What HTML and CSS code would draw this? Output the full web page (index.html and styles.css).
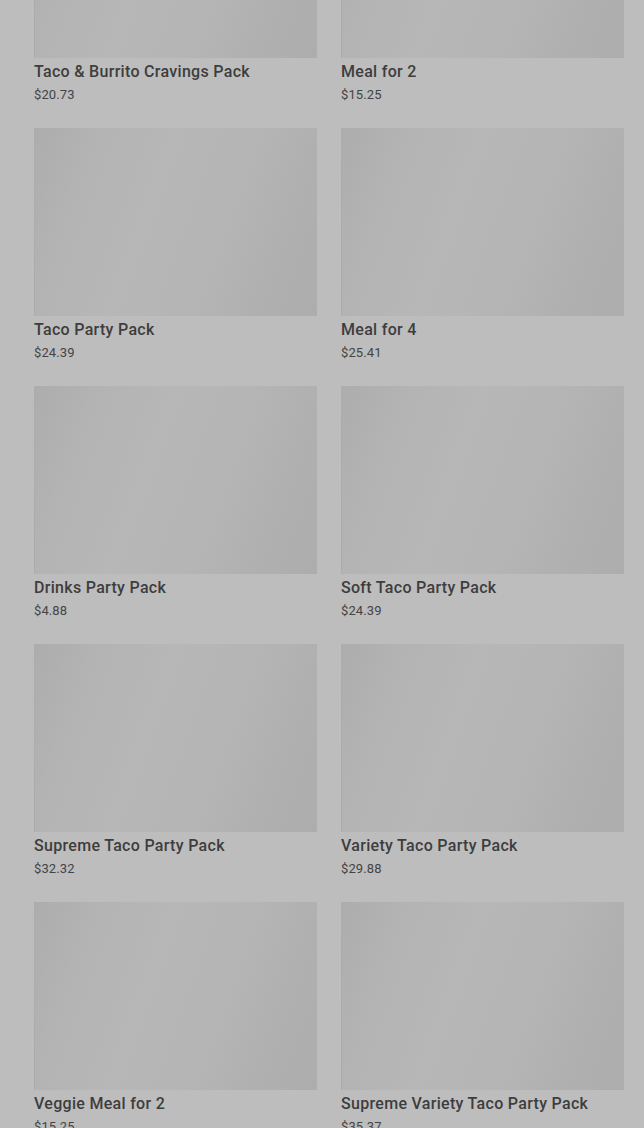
FILE: index.html
```html
<!doctype html>
<html lang="en">
<head>
    <meta charset="utf-8">
    <meta name="viewport" content="width=device-width, initial-scale=1">
    <title>Party Packs</title>
    <link rel="stylesheet" href="styles.css">
</head>
<body>
    <div class="menu">
        <div class="grid">
            <div class="item">
                <div class="thumb"></div>
                <div class="name">Taco &amp; Burrito Cravings Pack</div>
                <div class="price">$20.73</div>
            </div>
            <div class="item">
                <div class="thumb"></div>
                <div class="name">Meal for 2</div>
                <div class="price">$15.25</div>
            </div>
            <div class="item">
                <div class="thumb"></div>
                <div class="name">Taco Party Pack</div>
                <div class="price">$24.39</div>
            </div>
            <div class="item">
                <div class="thumb"></div>
                <div class="name">Meal for 4</div>
                <div class="price">$25.41</div>
            </div>
            <div class="item">
                <div class="thumb"></div>
                <div class="name">Drinks Party Pack</div>
                <div class="price">$4.88</div>
            </div>
            <div class="item">
                <div class="thumb"></div>
                <div class="name">Soft Taco Party Pack</div>
                <div class="price">$24.39</div>
            </div>
            <div class="item">
                <div class="thumb"></div>
                <div class="name">Supreme Taco Party Pack</div>
                <div class="price">$32.32</div>
            </div>
            <div class="item">
                <div class="thumb"></div>
                <div class="name">Variety Taco Party Pack</div>
                <div class="price">$29.88</div>
            </div>
            <div class="item">
                <div class="thumb"></div>
                <div class="name">Veggie Meal for 2</div>
                <div class="price">$15.25</div>
            </div>
            <div class="item">
                <div class="thumb"></div>
                <div class="name">Supreme Variety Taco Party Pack</div>
                <div class="price">$35.37</div>
            </div>
        </div>
    </div>
</body>
</html>
```

FILE: styles.css
```css
html, body {
   margin: 0;
   background-color: #bdbdbd;
   overflow: hidden;
}

.menu {
   padding: 0 20px 0 34px;
   margin-top: -130px;
   font-family: Roboto, "Noto Sans", sans-serif;
}

.grid {
   display: grid;
   grid-template-columns: 1fr 1fr;
   column-gap: 24px;
   row-gap: 23px;
}

.thumb {
   height: 188px;
   background: linear-gradient(110deg, #adadad 0%, #b3b3b3 18%, #b7b7b7 40%, #b5b5b5 62%, #b0b0b0 82%, #adadad 100%);
   border-left: 1px solid #acacac;
}

.name {
   margin-top: 2px;
   font-size: 16px;
   font-weight: 500;
   line-height: 24px;
   letter-spacing: 0.3px;
   color: #3d3d3d;
}

.price {
   margin-top: 1px;
   font-size: 13px;
   line-height: 20px;
   letter-spacing: 0.1px;
   color: #444444;
}
```
